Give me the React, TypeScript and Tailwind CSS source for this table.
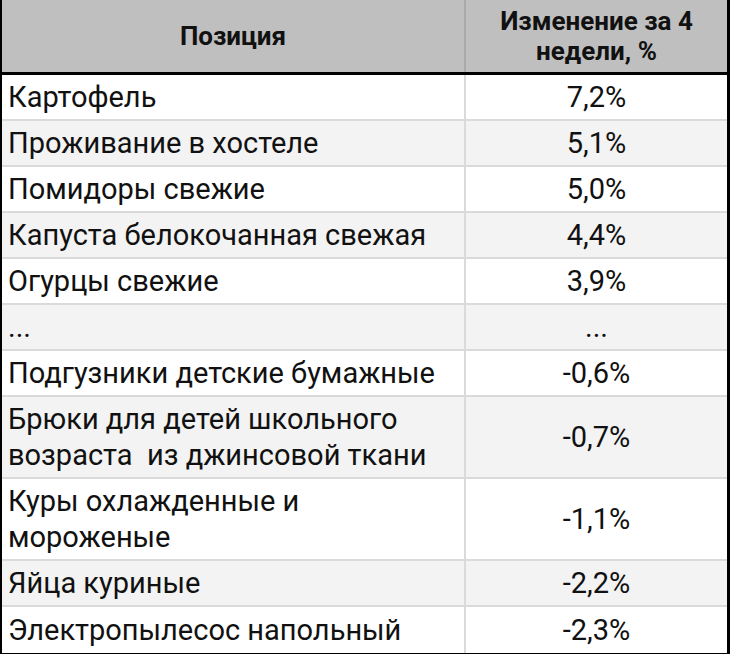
const rows: { name: string; value: string; tall?: boolean }[] = [
  { name: "Картофель", value: "7,2%" },
  { name: "Проживание в хостеле", value: "5,1%" },
  { name: "Помидоры свежие", value: "5,0%" },
  { name: "Капуста белокочанная свежая", value: "4,4%" },
  { name: "Огурцы свежие", value: "3,9%" },
  { name: "...", value: "..." },
  { name: "Подгузники детские бумажные", value: "-0,6%" },
  { name: "Брюки для детей школьного\nвозраста  из джинсовой ткани", value: "-0,7%", tall: true },
  { name: "Куры охлажденные и\nмороженые", value: "-1,1%", tall: true },
  { name: "Яйца куриные", value: "-2,2%" },
  { name: "Электропылесос напольный", value: "-2,3%" },
];

export default function App() {
  return (
    <div className="w-[730px] bg-white text-[#111] font-['Roboto',sans-serif]">
      <div className="border-l-2 border-r-[3px] border-b-2 border-black">
        {/* Header */}
        <div className="grid grid-cols-[464px_1fr] h-[75px] bg-[#bfbfbf] border-b-[3px] border-black text-[26px] font-bold leading-[30px]">
          <div className="flex items-center justify-center border-r-2 border-[#a9a9a9]">Позиция</div>
          <div className="flex items-center justify-center text-center">
            Изменение за 4
            <br />
            недели, %
          </div>
        </div>

        {/* Body */}
        {rows.map((r, i) => (
          <div
            key={i}
            className={`grid grid-cols-[464px_1fr] text-[29px] leading-[36px] ${
              i % 2 === 1 ? "bg-[#f3f3f3]" : "bg-white"
            } ${i < rows.length - 1 ? "border-b-2 border-[#dadada]" : ""} ${r.tall ? "h-[82px]" : "h-[46px]"}`}
          >
            <div className="flex items-center pl-[6px] border-r-2 border-[#dadada] whitespace-pre">{r.name}</div>
            <div className="flex items-center justify-center">{r.value}</div>
          </div>
        ))}
      </div>
    </div>
  );
}
